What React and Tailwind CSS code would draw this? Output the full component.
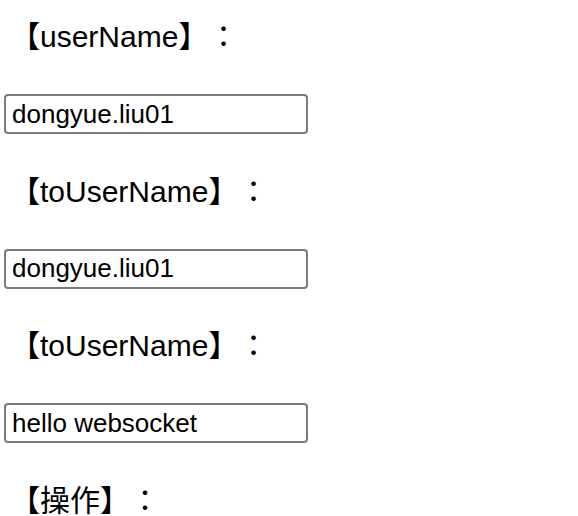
export default function App() {
  const sections = [
    { label: "userName", value: "dongyue.liu01" },
    { label: "toUserName", value: "dongyue.liu01" },
    { label: "toUserName", value: "hello websocket" },
  ];
  const Heading = ({ children }) => (
    <div className="h-[40px] leading-[40px] text-[30px] pl-[10px] whitespace-nowrap [text-spacing-trim:space-all] font-['Liberation_Sans','Noto_Sans_CJK_JP',sans-serif]">
      {"【"}
      {children}
      {"】："}
    </div>
  );
  return (
    <div className="w-[578px] h-[516px] overflow-hidden bg-white pt-[17px] text-black">
      {sections.map((s, i) => (
        <div key={i} className="flex flex-col">
          <Heading>{s.label}</Heading>
          <div className="h-[37px]" />
          <div className="pl-[4px]">
            <input
              readOnly
              value={s.value}
              className="block w-[304px] h-[40px] border-2 border-[#7a7a7a] rounded-[4px] pl-[6px] text-[26px] leading-[36px] text-black outline-none font-['Liberation_Sans',sans-serif]"
            />
          </div>
          <div className="h-[37.5px]" />
        </div>
      ))}
      <Heading>操作</Heading>
    </div>
  );
}
